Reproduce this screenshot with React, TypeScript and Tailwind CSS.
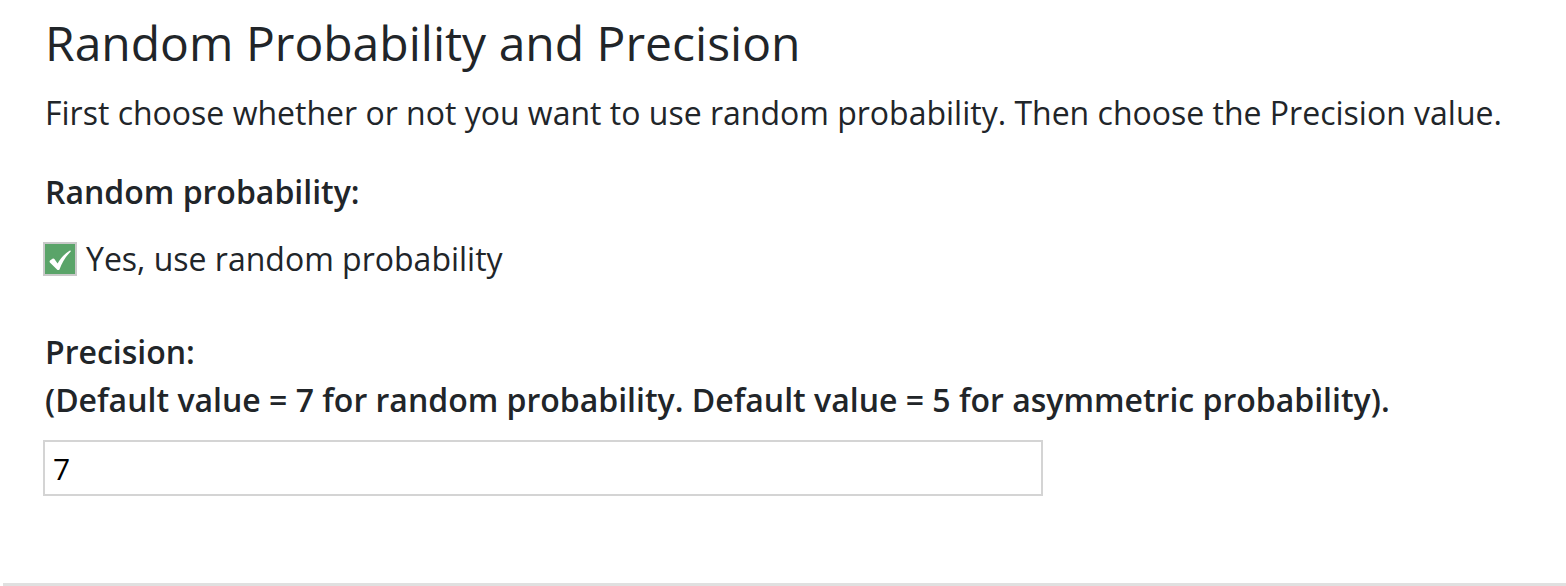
import React from "react";

export default function App() {
  return (
    <div className="w-[1566px] h-[586px] bg-white overflow-hidden relative" style={{ fontFamily: '"Open Sans", sans-serif' }}>
      <div className="pl-[45px] pt-[11px] text-[#212529]">
        <h1 className="text-[48px] leading-[64px] font-normal">Random Probability and Precision</h1>
        <p className="text-[32px] leading-[44px] mt-[16px]">First choose whether or not you want to use random probability. Then choose the Precision value.</p>
        <div className="text-[32px] leading-[44px] font-semibold mt-[35px]">Random probability:</div>
        <label className="flex items-center mt-[23px] h-[44px] -ml-[2px]">
          <span className="w-[34px] h-[34px] bg-[#5aa469] border-2 border-[#c9c9c9] flex items-center justify-center mr-[9px]">
            <svg width="22" height="20" viewBox="0 0 20 18" className="mt-[2px]">
              <path d="M7.5 17.8 L0.8 11.2 C0.3 10.6 0.5 9.8 1.2 9.3 L3.2 7.9 C3.8 7.5 4.5 7.6 4.9 8.2 L7.8 12.2 C10.8 7 14.5 3 19 0.4 C19.6 0.1 20.1 0.8 19.7 1.3 C15.5 5.5 12 11 9.6 17.5 C9.3 18.4 8.2 18.6 7.5 17.8 Z" fill="white" />
            </svg>
          </span>
          <span className="text-[32px] leading-[44px]">Yes, use random probability</span>
        </label>
        <div className="text-[32px] leading-[44px] font-semibold mt-[49px]">Precision:</div>
        <div className="text-[32px] leading-[44px] font-semibold mt-[4px]">(Default value = 7 for random probability. Default value = 5 for asymmetric probability).</div>
        <div className="mt-[18px] -ml-[2px] w-[1000px] h-[56px] border-2 border-[#d4d4d4] flex items-center pl-[8px] text-[30px] text-black">7</div>
      </div>
      <div className="absolute left-[3px] right-0 bottom-0 h-[3px] bg-[#e0e0e0]" />
    </div>
  );
}
